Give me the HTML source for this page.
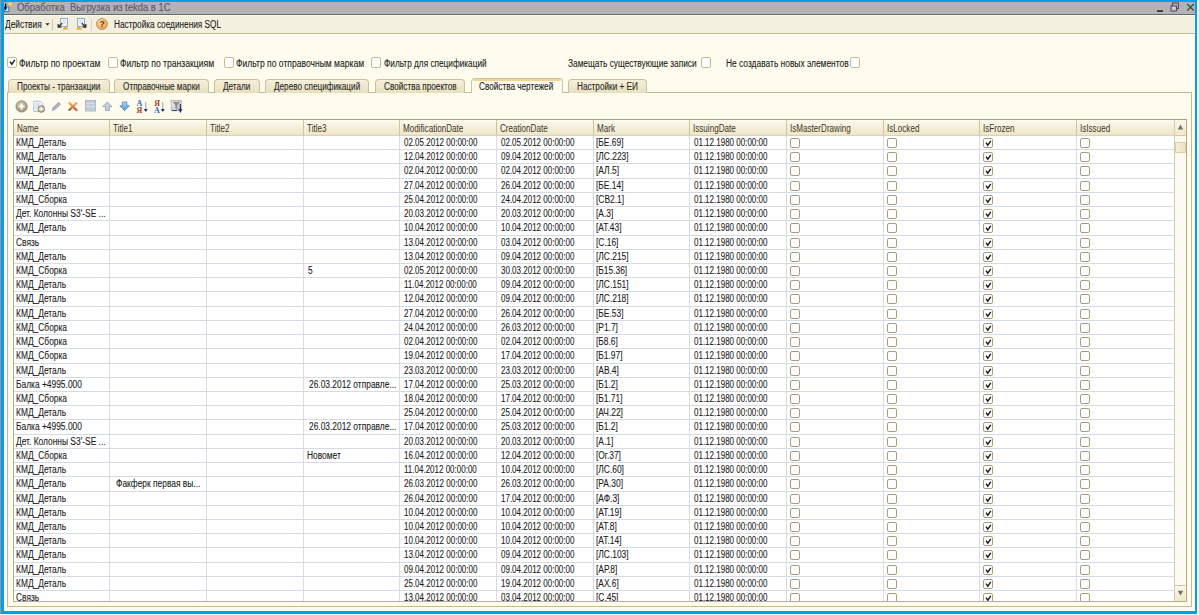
<!DOCTYPE html>
<html><head><meta charset="utf-8"><style>
*{box-sizing:border-box}
html,body{margin:0;padding:0;width:1199px;height:615px;overflow:hidden;background:#fefcef}
body{position:relative;font-family:"Liberation Sans",sans-serif;font-size:10px;color:#1c1c1c}
.a{position:absolute}
.t{position:absolute;white-space:nowrap;line-height:11px;transform:scaleX(0.84);transform-origin:0 0;-webkit-text-stroke:0.1px currentColor}
.d{transform:scaleX(0.80)}
.cb{position:absolute;width:10px;height:10px;border:1px solid #a89e7e;border-radius:2px;background:#fff}
.ck{position:absolute;left:1px;top:1px}
.tab{position:absolute;top:79px;height:14px;border:1px solid #c9bf9b;border-bottom:none;border-radius:4px 4px 0 0;background:linear-gradient(#f6f0da,#e8dfbd)}
.hl{position:absolute;height:1px;left:14px;width:1160px;background:#d5dbe2}
.vl{position:absolute;width:1px;top:136px;height:465px;background:#d8dde3}
.hv{position:absolute;width:1px;top:120px;height:15px;background:#cfc4a0}
</style></head><body>

<div class="a" style="left:0;top:0;width:1px;height:615px;background:#9a9590"></div>
<div class="a" style="left:1px;top:0;width:1196px;height:614px;border:3px solid #04a0e6;border-top-width:2px;border-right-width:2px"></div>
<div class="a" style="left:1197px;top:0;width:2px;height:615px;background:#f6f6f6"></div>
<div class="a" style="left:0;top:614px;width:1199px;height:1px;background:#f4f4f4"></div>
<div class="a" style="left:4px;top:2px;width:1191px;height:12px;background:#b3b3b3"></div>
<div class="a" style="left:4px;top:14px;width:1191px;height:1px;background:#6b6b6b"></div>
<div class="t" style="left:17px;top:2px;font-size:10.5px;transform:scaleX(0.9);-webkit-text-stroke:0.15px #5a596a;color:#5a596a">Обработка&nbsp; Выгрузка из tekda в 1С</div>
<svg class="a" style="left:4px;top:2px" width="12" height="12" viewBox="0 0 12 12"><defs><radialGradient id="og" cx="0.4" cy="0.3" r="0.7"><stop offset="0" stop-color="#ffe9a8"/><stop offset="1" stop-color="#f39a30"/></radialGradient></defs><rect x="0.5" y="5" width="4.3" height="4.6" fill="#c6e6fb" stroke="#3b6cb2" stroke-width="0.9"/><path d="M1.6 1.5 V7" stroke="#000" stroke-width="1.2"/><path d="M0.2 5.6 L1.6 8.4 L3 5.6Z" fill="#000"/><path d="M6.5 0.2 L9.2 2.6 L6.5 5.4 L3.9 2.6Z" fill="url(#og)"/><circle cx="6.5" cy="2.7" r="2.1" fill="url(#og)"/></svg>
<div class="a" style="left:1157px;top:10px;width:6px;height:2px;background:#444"></div>
<svg class="a" style="left:1170px;top:2px" width="10" height="10" viewBox="0 0 10 10"><rect x="2.5" y="1" width="6" height="5.5" fill="none" stroke="#505058" stroke-width="1.1"/><rect x="1" y="4" width="5.5" height="5" fill="#cfcaca" stroke="#505058" stroke-width="1.1"/></svg>
<svg class="a" style="left:1186px;top:3px" width="9" height="9" viewBox="0 0 9 9"><path d="M1.2 1 L7.8 7.6 M7.8 1 L1.2 7.6" stroke="#404048" stroke-width="1.3"/></svg>
<div class="a" style="left:4px;top:15px;width:1191px;height:18px;background:#f4f0e0"></div>
<div class="a" style="left:4px;top:33px;width:1191px;height:1px;background:#c6ba92"></div>
<div class="a" style="left:4px;top:15px;width:1191px;height:1px;background:#fdfaee"></div>
<div class="t" style="left:5px;top:19px">Действия</div>
<svg class="a" style="left:45px;top:23px" width="5" height="3" viewBox="0 0 5 3"><path d="M0.3 0.2 H4.7 L2.5 2.6Z" fill="#2a2418"/></svg>
<div class="a" style="left:52px;top:19px;width:1px;height:12px;background:#d4ccb4"></div>
<div class="a" style="left:91px;top:19px;width:1px;height:12px;background:#d8d2c0"></div>
<svg class="a" style="left:57px;top:18px" width="13" height="12" viewBox="0 0 13 12"><rect x="3.5" y="0.5" width="7" height="8" fill="#f4f6fa" stroke="#8eaad6"/><path d="M5 3H9M5 5H9" stroke="#cfd8e8"/><path d="M5.2 5.2 L1.2 9.2 M1.2 6 V9.2 H4.4" stroke="#3a3020" stroke-width="1.3" fill="none"/><path d="M4.8 11.6 L8.4 8.6 L12 11.6Z" fill="#f0a030"/></svg>
<svg class="a" style="left:75px;top:18px" width="13" height="12" viewBox="0 0 13 12"><rect x="2.5" y="0.5" width="7" height="8" fill="#f4f6fa" stroke="#8eaad6"/><path d="M4 3H8M4 5H8" stroke="#cfd8e8"/><path d="M6.8 5.2 L10.8 9.2 M10.8 6 V9.2 H7.6" stroke="#3a3020" stroke-width="1.3" fill="none"/><path d="M0.6 11.6 L4.2 8.6 L7.8 11.6Z" fill="#f0a030"/></svg>
<svg class="a" style="left:96px;top:18px" width="12" height="12" viewBox="0 0 12 12"><defs><radialGradient id="hg" cx="0.4" cy="0.35" r="0.7"><stop offset="0" stop-color="#fde2b0"/><stop offset="1" stop-color="#eb9a3c"/></radialGradient></defs><circle cx="6" cy="6" r="5.5" fill="url(#hg)" stroke="#b88a5a" stroke-width="0.8"/><text x="6" y="9.2" font-family="Liberation Sans" font-size="8.5" font-weight="bold" text-anchor="middle" fill="#6b1f1f" letter-spacing="0">?</text></svg>
<div class="t" style="left:114px;top:19px;transform:scaleX(0.825)">Настройка соединения SQL</div>
<div class="cb" style="left:7px;top:57px;height:11px;border-color:#c4bb9c"><svg class="ck" width="8" height="8" viewBox="0 0 8 8"><path d="M1 2.6 L2.8 5.2 L5.8 0.8" stroke="#1a1a1a" stroke-width="1.4" fill="none"/></svg></div>
<div class="t" style="left:19px;top:58px;transform:scaleX(0.87)">Фильтр по проектам</div>
<div class="cb" style="left:108px;top:57px;height:11px;border-color:#c4bb9c"></div>
<div class="t" style="left:120px;top:58px;transform:scaleX(0.86)">Фильтр по транзакциям</div>
<div class="cb" style="left:224px;top:57px;height:11px;border-color:#c4bb9c"></div>
<div class="t" style="left:236px;top:58px;transform:scaleX(0.855)">Фильтр по отправочным маркам</div>
<div class="cb" style="left:371px;top:57px;height:11px;border-color:#c4bb9c"></div>
<div class="t" style="left:384px;top:58px;transform:scaleX(0.825)">Фильтр для спецификаций</div>
<div class="t" style="left:568px;top:58px;transform:scaleX(0.83)">Замещать существующие записи</div>
<div class="cb" style="left:701px;top:57px;height:11px;border-color:#c4bb9c"></div>
<div class="t" style="left:726px;top:58px">Не создавать новых элементов</div>
<div class="cb" style="left:850px;top:57px;height:11px;border-color:#c4bb9c"></div>
<div class="a" style="left:7px;top:92px;width:1185px;height:515px;border:1px solid #c2b998;background:#fefcef"></div>
<div class="tab" style="left:8px;width:102px"></div>
<div class="t" style="left:17px;top:81px;color:#2a2a2a;transform:scaleX(0.82)">Проекты - транзакции</div>
<div class="tab" style="left:114px;width:95px"></div>
<div class="t" style="left:123px;top:81px;color:#2a2a2a;transform:scaleX(0.82)">Отправочные марки</div>
<div class="tab" style="left:214px;width:46px"></div>
<div class="t" style="left:223px;top:81px;color:#2a2a2a;transform:scaleX(0.82)">Детали</div>
<div class="tab" style="left:265px;width:104px"></div>
<div class="t" style="left:274px;top:81px;color:#2a2a2a;transform:scaleX(0.82)">Дерево спецификаций</div>
<div class="tab" style="left:375px;width:90px"></div>
<div class="t" style="left:384px;top:81px;color:#2a2a2a;transform:scaleX(0.82)">Свойства проектов</div>
<div class="a" style="left:471px;top:78px;width:92px;height:15px;border:1px solid #cdc3a0;border-bottom:none;border-radius:4px 4px 0 0;background:#fefcef"></div>
<div class="a" style="left:473px;top:79px;width:88px;height:2px;background:#f3d590;border-radius:2px 2px 0 0"></div>
<div class="t" style="left:479px;top:81px;color:#222;transform:scaleX(0.82)">Свойства чертежей</div>
<div class="tab" style="left:568px;width:79px"></div>
<div class="t" style="left:577px;top:81px;color:#2a2a2a;transform:scaleX(0.82)">Настройки + ЕИ</div>
<svg class="a" style="left:14px;top:99px" width="172" height="16" viewBox="0 0 172 16">
<defs><radialGradient id="g1" cx="0.45" cy="0.4" r="0.6"><stop offset="0" stop-color="#d8d2b8"/><stop offset="1" stop-color="#9a9272"/></radialGradient>
<linearGradient id="g2" x1="0" y1="0" x2="0" y2="1"><stop offset="0" stop-color="#b8daf6"/><stop offset="1" stop-color="#4f96dc"/></linearGradient>
<linearGradient id="g3" x1="0" y1="0" x2="0" y2="1"><stop offset="0" stop-color="#f4b060"/><stop offset="1" stop-color="#b85a30"/></linearGradient>
<linearGradient id="g4" x1="0" y1="0" x2="1" y2="1"><stop offset="0" stop-color="#f4f4f4"/><stop offset="1" stop-color="#b8b8b8"/></linearGradient></defs>
<circle cx="7.6" cy="7.4" r="5.7" fill="url(#g1)" stroke="#8c8668" stroke-width="0.7"/><path d="M4.6 7.4 H10.6 M7.6 4.4 V10.4" stroke="#fff" stroke-width="1.8"/>
<path d="M19.8 2.3 H26.5 L28.8 4.6 V12.4 H19.8Z" fill="#f4f6fa" stroke="#9ab0d0" stroke-width="0.8"/><path d="M21.5 5H26M21.5 7H25M21.5 9H24" stroke="#b8c4d8" stroke-width="0.8"/>
<circle cx="27.3" cy="10" r="3.4" fill="url(#g1)" stroke="#857e60" stroke-width="0.6"/><path d="M25.2 10H29.4M27.3 7.9V12.1" stroke="#fff" stroke-width="1.3"/>
<path d="M38.2 11.6 L39 8.6 L44.6 3.2 L46.6 5.2 L41 10.6Z" fill="#aab4c2" stroke="#8a96a8" stroke-width="0.6"/>
<path d="M55.4 4 L62.4 11 M62.4 4 L55.4 11" stroke="url(#g3)" stroke-width="2.4" stroke-linecap="round"/>
<rect x="71.5" y="1.5" width="10" height="10.5" fill="#c4ccd8" stroke="#b0bccc"/><path d="M72.5 4.5H80.5M72.5 7.5H80.5" stroke="#dce2ea"/>
<path d="M93.4 3 L98 7.6 H95.4 V11.6 H91.4 V7.6 H88.8Z" fill="#c2cede" stroke="#8c9cb2" stroke-width="0.8" stroke-linejoin="round"/>
<path d="M110.6 11.6 L115.4 6.8 H112.8 V3 H108.4 V6.8 H105.8Z" fill="url(#g2)" stroke="#4f82c0" stroke-width="0.8" stroke-linejoin="round"/>
<text x="122.6" y="7.2" font-family="Liberation Serif" font-size="8" font-weight="bold" fill="#2f62b4">A</text><text x="122.6" y="14" font-family="Liberation Serif" font-size="8" font-weight="bold" fill="#a8401a">Я</text><path d="M131.8 3V11" stroke="#8a8e98" stroke-width="0.9"/><path d="M129.8 10 L131.8 13 L133.8 10Z" fill="#1c3468"/>
<text x="140.2" y="7.2" font-family="Liberation Serif" font-size="8" font-weight="bold" fill="#a8401a">Я</text><text x="140" y="14" font-family="Liberation Serif" font-size="8" font-weight="bold" fill="#2f62b4">A</text><path d="M148.8 3V11" stroke="#8a8e98" stroke-width="0.9"/><path d="M146.8 10 L148.8 13 L150.8 10Z" fill="#1c3468"/>
<rect x="157.2" y="1.4" width="10" height="10" fill="url(#g4)" stroke="#a8acb4" stroke-width="0.8"/><path d="M158.6 2.8 H166 L163.4 6.6 V10.4 L161.4 9 V6.6Z" fill="#8e9298"/><path d="M158 11.6 H163" stroke="#2a3a8a" stroke-width="1"/><path d="M166.4 5V11.5 M164.9 10 L166.4 12.8 L167.9 10" stroke="#203268" stroke-width="1.1" fill="none"/>
</svg>
<div class="a" style="left:13px;top:119px;width:1174px;height:483px;border:1px solid #b5aa84;border-top-color:#a99e7a;background:#fff"></div>
<div class="a" style="left:14px;top:120px;width:1160px;height:15px;background:linear-gradient(#fdfcf4,#f7f4e6 20%,#f1ead0 80%,#eee4c4)"></div>
<div class="a" style="left:14px;top:135px;width:1160px;height:1px;background:#d8d2bc"></div>
<div class="t" style="left:17px;top:123px;color:#3e3626;transform:scaleX(0.81);-webkit-text-stroke:0">Name</div>
<div class="hv" style="left:109px"></div>
<div class="vl" style="left:109px"></div>
<div class="t" style="left:113px;top:123px;color:#3e3626;transform:scaleX(0.81);-webkit-text-stroke:0">Title1</div>
<div class="hv" style="left:206px"></div>
<div class="vl" style="left:206px"></div>
<div class="t" style="left:210px;top:123px;color:#3e3626;transform:scaleX(0.81);-webkit-text-stroke:0">Title2</div>
<div class="hv" style="left:303px"></div>
<div class="vl" style="left:303px"></div>
<div class="t" style="left:307px;top:123px;color:#3e3626;transform:scaleX(0.81);-webkit-text-stroke:0">Title3</div>
<div class="hv" style="left:399px"></div>
<div class="vl" style="left:399px"></div>
<div class="t" style="left:403px;top:123px;color:#3e3626;transform:scaleX(0.81);-webkit-text-stroke:0">ModificationDate</div>
<div class="hv" style="left:496px"></div>
<div class="vl" style="left:496px"></div>
<div class="t" style="left:500px;top:123px;color:#3e3626;transform:scaleX(0.81);-webkit-text-stroke:0">CreationDate</div>
<div class="hv" style="left:593px"></div>
<div class="vl" style="left:593px"></div>
<div class="t" style="left:597px;top:123px;color:#3e3626;transform:scaleX(0.81);-webkit-text-stroke:0">Mark</div>
<div class="hv" style="left:689px"></div>
<div class="vl" style="left:689px"></div>
<div class="t" style="left:693px;top:123px;color:#3e3626;transform:scaleX(0.81);-webkit-text-stroke:0">IssuingDate</div>
<div class="hv" style="left:786px"></div>
<div class="vl" style="left:786px"></div>
<div class="t" style="left:790px;top:123px;color:#3e3626;transform:scaleX(0.81);-webkit-text-stroke:0">IsMasterDrawing</div>
<div class="hv" style="left:883px"></div>
<div class="vl" style="left:883px"></div>
<div class="t" style="left:887px;top:123px;color:#3e3626;transform:scaleX(0.81);-webkit-text-stroke:0">IsLocked</div>
<div class="hv" style="left:979px"></div>
<div class="vl" style="left:979px"></div>
<div class="t" style="left:983px;top:123px;color:#3e3626;transform:scaleX(0.81);-webkit-text-stroke:0">IsFrozen</div>
<div class="hv" style="left:1076px"></div>
<div class="vl" style="left:1076px"></div>
<div class="t" style="left:1080px;top:123px;color:#3e3626;transform:scaleX(0.81);-webkit-text-stroke:0">IsIssued</div>
<div class="hl" style="top:149px"></div>
<div class="hl" style="top:163px"></div>
<div class="hl" style="top:178px"></div>
<div class="hl" style="top:192px"></div>
<div class="hl" style="top:206px"></div>
<div class="hl" style="top:220px"></div>
<div class="hl" style="top:235px"></div>
<div class="hl" style="top:249px"></div>
<div class="hl" style="top:263px"></div>
<div class="hl" style="top:277px"></div>
<div class="hl" style="top:291px"></div>
<div class="hl" style="top:306px"></div>
<div class="hl" style="top:320px"></div>
<div class="hl" style="top:334px"></div>
<div class="hl" style="top:348px"></div>
<div class="hl" style="top:363px"></div>
<div class="hl" style="top:377px"></div>
<div class="hl" style="top:391px"></div>
<div class="hl" style="top:405px"></div>
<div class="hl" style="top:419px"></div>
<div class="hl" style="top:434px"></div>
<div class="hl" style="top:448px"></div>
<div class="hl" style="top:462px"></div>
<div class="hl" style="top:476px"></div>
<div class="hl" style="top:491px"></div>
<div class="hl" style="top:505px"></div>
<div class="hl" style="top:519px"></div>
<div class="hl" style="top:533px"></div>
<div class="hl" style="top:547px"></div>
<div class="hl" style="top:562px"></div>
<div class="hl" style="top:576px"></div>
<div class="hl" style="top:590px"></div>
<div class="t" style="left:16px;top:137px">КМД_Деталь</div>
<div class="t d" style="left:404px;top:137px">02.05.2012 00:00:00</div>
<div class="t d" style="left:501px;top:137px">02.05.2012 00:00:00</div>
<div class="t" style="left:596px;top:137px">[БЕ.69]</div>
<div class="t d" style="left:694px;top:137px">01.12.1980 00:00:00</div>
<div class="cb" style="left:790px;top:138px;"></div>
<div class="cb" style="left:887px;top:138px;"></div>
<div class="cb" style="left:983px;top:138px;"><svg class="ck" width="8" height="8" viewBox="0 0 8 8"><path d="M1 2.6 L2.8 5.2 L5.8 0.8" stroke="#1a1a1a" stroke-width="1.4" fill="none"/></svg></div>
<div class="cb" style="left:1080px;top:138px;"></div>
<div class="t" style="left:16px;top:151px">КМД_Деталь</div>
<div class="t d" style="left:404px;top:151px">12.04.2012 00:00:00</div>
<div class="t d" style="left:501px;top:151px">09.04.2012 00:00:00</div>
<div class="t" style="left:596px;top:151px">[ЛС.223]</div>
<div class="t d" style="left:694px;top:151px">01.12.1980 00:00:00</div>
<div class="cb" style="left:790px;top:152px;"></div>
<div class="cb" style="left:887px;top:152px;"></div>
<div class="cb" style="left:983px;top:152px;"><svg class="ck" width="8" height="8" viewBox="0 0 8 8"><path d="M1 2.6 L2.8 5.2 L5.8 0.8" stroke="#1a1a1a" stroke-width="1.4" fill="none"/></svg></div>
<div class="cb" style="left:1080px;top:152px;"></div>
<div class="t" style="left:16px;top:165px">КМД_Деталь</div>
<div class="t d" style="left:404px;top:165px">02.04.2012 00:00:00</div>
<div class="t d" style="left:501px;top:165px">02.04.2012 00:00:00</div>
<div class="t" style="left:596px;top:165px">[АЛ.5]</div>
<div class="t d" style="left:694px;top:165px">01.12.1980 00:00:00</div>
<div class="cb" style="left:790px;top:166px;"></div>
<div class="cb" style="left:887px;top:166px;"></div>
<div class="cb" style="left:983px;top:166px;"><svg class="ck" width="8" height="8" viewBox="0 0 8 8"><path d="M1 2.6 L2.8 5.2 L5.8 0.8" stroke="#1a1a1a" stroke-width="1.4" fill="none"/></svg></div>
<div class="cb" style="left:1080px;top:166px;"></div>
<div class="t" style="left:16px;top:180px">КМД_Деталь</div>
<div class="t d" style="left:404px;top:180px">27.04.2012 00:00:00</div>
<div class="t d" style="left:501px;top:180px">26.04.2012 00:00:00</div>
<div class="t" style="left:596px;top:180px">[БЕ.14]</div>
<div class="t d" style="left:694px;top:180px">01.12.1980 00:00:00</div>
<div class="cb" style="left:790px;top:181px;"></div>
<div class="cb" style="left:887px;top:181px;"></div>
<div class="cb" style="left:983px;top:181px;"><svg class="ck" width="8" height="8" viewBox="0 0 8 8"><path d="M1 2.6 L2.8 5.2 L5.8 0.8" stroke="#1a1a1a" stroke-width="1.4" fill="none"/></svg></div>
<div class="cb" style="left:1080px;top:181px;"></div>
<div class="t" style="left:16px;top:194px">КМД_Сборка</div>
<div class="t d" style="left:404px;top:194px">25.04.2012 00:00:00</div>
<div class="t d" style="left:501px;top:194px">24.04.2012 00:00:00</div>
<div class="t" style="left:596px;top:194px">[СВ2.1]</div>
<div class="t d" style="left:694px;top:194px">01.12.1980 00:00:00</div>
<div class="cb" style="left:790px;top:195px;"></div>
<div class="cb" style="left:887px;top:195px;"></div>
<div class="cb" style="left:983px;top:195px;"><svg class="ck" width="8" height="8" viewBox="0 0 8 8"><path d="M1 2.6 L2.8 5.2 L5.8 0.8" stroke="#1a1a1a" stroke-width="1.4" fill="none"/></svg></div>
<div class="cb" style="left:1080px;top:195px;"></div>
<div class="t" style="left:16px;top:208px">Дет. Колонны S3&#x27;-SE ...</div>
<div class="t d" style="left:404px;top:208px">20.03.2012 00:00:00</div>
<div class="t d" style="left:501px;top:208px">20.03.2012 00:00:00</div>
<div class="t" style="left:596px;top:208px">[А.3]</div>
<div class="t d" style="left:694px;top:208px">01.12.1980 00:00:00</div>
<div class="cb" style="left:790px;top:209px;"></div>
<div class="cb" style="left:887px;top:209px;"></div>
<div class="cb" style="left:983px;top:209px;"><svg class="ck" width="8" height="8" viewBox="0 0 8 8"><path d="M1 2.6 L2.8 5.2 L5.8 0.8" stroke="#1a1a1a" stroke-width="1.4" fill="none"/></svg></div>
<div class="cb" style="left:1080px;top:209px;"></div>
<div class="t" style="left:16px;top:222px">КМД_Деталь</div>
<div class="t d" style="left:404px;top:222px">10.04.2012 00:00:00</div>
<div class="t d" style="left:501px;top:222px">10.04.2012 00:00:00</div>
<div class="t" style="left:596px;top:222px">[АТ.43]</div>
<div class="t d" style="left:694px;top:222px">01.12.1980 00:00:00</div>
<div class="cb" style="left:790px;top:223px;"></div>
<div class="cb" style="left:887px;top:223px;"></div>
<div class="cb" style="left:983px;top:223px;"><svg class="ck" width="8" height="8" viewBox="0 0 8 8"><path d="M1 2.6 L2.8 5.2 L5.8 0.8" stroke="#1a1a1a" stroke-width="1.4" fill="none"/></svg></div>
<div class="cb" style="left:1080px;top:223px;"></div>
<div class="t" style="left:16px;top:237px">Связь</div>
<div class="t d" style="left:404px;top:237px">13.04.2012 00:00:00</div>
<div class="t d" style="left:501px;top:237px">03.04.2012 00:00:00</div>
<div class="t" style="left:596px;top:237px">[С.16]</div>
<div class="t d" style="left:694px;top:237px">01.12.1980 00:00:00</div>
<div class="cb" style="left:790px;top:238px;"></div>
<div class="cb" style="left:887px;top:238px;"></div>
<div class="cb" style="left:983px;top:238px;"><svg class="ck" width="8" height="8" viewBox="0 0 8 8"><path d="M1 2.6 L2.8 5.2 L5.8 0.8" stroke="#1a1a1a" stroke-width="1.4" fill="none"/></svg></div>
<div class="cb" style="left:1080px;top:238px;"></div>
<div class="t" style="left:16px;top:251px">КМД_Деталь</div>
<div class="t d" style="left:404px;top:251px">13.04.2012 00:00:00</div>
<div class="t d" style="left:501px;top:251px">09.04.2012 00:00:00</div>
<div class="t" style="left:596px;top:251px">[ЛС.215]</div>
<div class="t d" style="left:694px;top:251px">01.12.1980 00:00:00</div>
<div class="cb" style="left:790px;top:252px;"></div>
<div class="cb" style="left:887px;top:252px;"></div>
<div class="cb" style="left:983px;top:252px;"><svg class="ck" width="8" height="8" viewBox="0 0 8 8"><path d="M1 2.6 L2.8 5.2 L5.8 0.8" stroke="#1a1a1a" stroke-width="1.4" fill="none"/></svg></div>
<div class="cb" style="left:1080px;top:252px;"></div>
<div class="t" style="left:16px;top:265px">КМД_Сборка</div>
<div class="t" style="left:308px;top:265px">5</div>
<div class="t d" style="left:404px;top:265px">02.05.2012 00:00:00</div>
<div class="t d" style="left:501px;top:265px">30.03.2012 00:00:00</div>
<div class="t" style="left:596px;top:265px">[Б15.36]</div>
<div class="t d" style="left:694px;top:265px">01.12.1980 00:00:00</div>
<div class="cb" style="left:790px;top:266px;"></div>
<div class="cb" style="left:887px;top:266px;"></div>
<div class="cb" style="left:983px;top:266px;"><svg class="ck" width="8" height="8" viewBox="0 0 8 8"><path d="M1 2.6 L2.8 5.2 L5.8 0.8" stroke="#1a1a1a" stroke-width="1.4" fill="none"/></svg></div>
<div class="cb" style="left:1080px;top:266px;"></div>
<div class="t" style="left:16px;top:279px">КМД_Деталь</div>
<div class="t d" style="left:404px;top:279px">11.04.2012 00:00:00</div>
<div class="t d" style="left:501px;top:279px">09.04.2012 00:00:00</div>
<div class="t" style="left:596px;top:279px">[ЛС.151]</div>
<div class="t d" style="left:694px;top:279px">01.12.1980 00:00:00</div>
<div class="cb" style="left:790px;top:280px;"></div>
<div class="cb" style="left:887px;top:280px;"></div>
<div class="cb" style="left:983px;top:280px;"><svg class="ck" width="8" height="8" viewBox="0 0 8 8"><path d="M1 2.6 L2.8 5.2 L5.8 0.8" stroke="#1a1a1a" stroke-width="1.4" fill="none"/></svg></div>
<div class="cb" style="left:1080px;top:280px;"></div>
<div class="t" style="left:16px;top:293px">КМД_Деталь</div>
<div class="t d" style="left:404px;top:293px">12.04.2012 00:00:00</div>
<div class="t d" style="left:501px;top:293px">09.04.2012 00:00:00</div>
<div class="t" style="left:596px;top:293px">[ЛС.218]</div>
<div class="t d" style="left:694px;top:293px">01.12.1980 00:00:00</div>
<div class="cb" style="left:790px;top:294px;"></div>
<div class="cb" style="left:887px;top:294px;"></div>
<div class="cb" style="left:983px;top:294px;"><svg class="ck" width="8" height="8" viewBox="0 0 8 8"><path d="M1 2.6 L2.8 5.2 L5.8 0.8" stroke="#1a1a1a" stroke-width="1.4" fill="none"/></svg></div>
<div class="cb" style="left:1080px;top:294px;"></div>
<div class="t" style="left:16px;top:308px">КМД_Деталь</div>
<div class="t d" style="left:404px;top:308px">27.04.2012 00:00:00</div>
<div class="t d" style="left:501px;top:308px">26.04.2012 00:00:00</div>
<div class="t" style="left:596px;top:308px">[БЕ.53]</div>
<div class="t d" style="left:694px;top:308px">01.12.1980 00:00:00</div>
<div class="cb" style="left:790px;top:309px;"></div>
<div class="cb" style="left:887px;top:309px;"></div>
<div class="cb" style="left:983px;top:309px;"><svg class="ck" width="8" height="8" viewBox="0 0 8 8"><path d="M1 2.6 L2.8 5.2 L5.8 0.8" stroke="#1a1a1a" stroke-width="1.4" fill="none"/></svg></div>
<div class="cb" style="left:1080px;top:309px;"></div>
<div class="t" style="left:16px;top:322px">КМД_Сборка</div>
<div class="t d" style="left:404px;top:322px">24.04.2012 00:00:00</div>
<div class="t d" style="left:501px;top:322px">26.03.2012 00:00:00</div>
<div class="t" style="left:596px;top:322px">[Р1.7]</div>
<div class="t d" style="left:694px;top:322px">01.12.1980 00:00:00</div>
<div class="cb" style="left:790px;top:323px;"></div>
<div class="cb" style="left:887px;top:323px;"></div>
<div class="cb" style="left:983px;top:323px;"><svg class="ck" width="8" height="8" viewBox="0 0 8 8"><path d="M1 2.6 L2.8 5.2 L5.8 0.8" stroke="#1a1a1a" stroke-width="1.4" fill="none"/></svg></div>
<div class="cb" style="left:1080px;top:323px;"></div>
<div class="t" style="left:16px;top:336px">КМД_Сборка</div>
<div class="t d" style="left:404px;top:336px">02.04.2012 00:00:00</div>
<div class="t d" style="left:501px;top:336px">02.04.2012 00:00:00</div>
<div class="t" style="left:596px;top:336px">[Б8.6]</div>
<div class="t d" style="left:694px;top:336px">01.12.1980 00:00:00</div>
<div class="cb" style="left:790px;top:337px;"></div>
<div class="cb" style="left:887px;top:337px;"></div>
<div class="cb" style="left:983px;top:337px;"><svg class="ck" width="8" height="8" viewBox="0 0 8 8"><path d="M1 2.6 L2.8 5.2 L5.8 0.8" stroke="#1a1a1a" stroke-width="1.4" fill="none"/></svg></div>
<div class="cb" style="left:1080px;top:337px;"></div>
<div class="t" style="left:16px;top:350px">КМД_Сборка</div>
<div class="t d" style="left:404px;top:350px">19.04.2012 00:00:00</div>
<div class="t d" style="left:501px;top:350px">17.04.2012 00:00:00</div>
<div class="t" style="left:596px;top:350px">[Б1.97]</div>
<div class="t d" style="left:694px;top:350px">01.12.1980 00:00:00</div>
<div class="cb" style="left:790px;top:351px;"></div>
<div class="cb" style="left:887px;top:351px;"></div>
<div class="cb" style="left:983px;top:351px;"><svg class="ck" width="8" height="8" viewBox="0 0 8 8"><path d="M1 2.6 L2.8 5.2 L5.8 0.8" stroke="#1a1a1a" stroke-width="1.4" fill="none"/></svg></div>
<div class="cb" style="left:1080px;top:351px;"></div>
<div class="t" style="left:16px;top:365px">КМД_Деталь</div>
<div class="t d" style="left:404px;top:365px">23.03.2012 00:00:00</div>
<div class="t d" style="left:501px;top:365px">23.03.2012 00:00:00</div>
<div class="t" style="left:596px;top:365px">[АВ.4]</div>
<div class="t d" style="left:694px;top:365px">01.12.1980 00:00:00</div>
<div class="cb" style="left:790px;top:366px;"></div>
<div class="cb" style="left:887px;top:366px;"></div>
<div class="cb" style="left:983px;top:366px;"><svg class="ck" width="8" height="8" viewBox="0 0 8 8"><path d="M1 2.6 L2.8 5.2 L5.8 0.8" stroke="#1a1a1a" stroke-width="1.4" fill="none"/></svg></div>
<div class="cb" style="left:1080px;top:366px;"></div>
<div class="t" style="left:16px;top:379px">Балка +4995.000</div>
<div class="t" style="left:309px;top:379px">26.03.2012 отправле...</div>
<div class="t d" style="left:404px;top:379px">17.04.2012 00:00:00</div>
<div class="t d" style="left:501px;top:379px">25.03.2012 00:00:00</div>
<div class="t" style="left:596px;top:379px">[Б1.2]</div>
<div class="t d" style="left:694px;top:379px">01.12.1980 00:00:00</div>
<div class="cb" style="left:790px;top:380px;"></div>
<div class="cb" style="left:887px;top:380px;"></div>
<div class="cb" style="left:983px;top:380px;"><svg class="ck" width="8" height="8" viewBox="0 0 8 8"><path d="M1 2.6 L2.8 5.2 L5.8 0.8" stroke="#1a1a1a" stroke-width="1.4" fill="none"/></svg></div>
<div class="cb" style="left:1080px;top:380px;"></div>
<div class="t" style="left:16px;top:393px">КМД_Сборка</div>
<div class="t d" style="left:404px;top:393px">18.04.2012 00:00:00</div>
<div class="t d" style="left:501px;top:393px">17.04.2012 00:00:00</div>
<div class="t" style="left:596px;top:393px">[Б1.71]</div>
<div class="t d" style="left:694px;top:393px">01.12.1980 00:00:00</div>
<div class="cb" style="left:790px;top:394px;"></div>
<div class="cb" style="left:887px;top:394px;"></div>
<div class="cb" style="left:983px;top:394px;"><svg class="ck" width="8" height="8" viewBox="0 0 8 8"><path d="M1 2.6 L2.8 5.2 L5.8 0.8" stroke="#1a1a1a" stroke-width="1.4" fill="none"/></svg></div>
<div class="cb" style="left:1080px;top:394px;"></div>
<div class="t" style="left:16px;top:407px">КМД_Деталь</div>
<div class="t d" style="left:404px;top:407px">25.04.2012 00:00:00</div>
<div class="t d" style="left:501px;top:407px">25.04.2012 00:00:00</div>
<div class="t" style="left:596px;top:407px">[АЧ.22]</div>
<div class="t d" style="left:694px;top:407px">01.12.1980 00:00:00</div>
<div class="cb" style="left:790px;top:408px;"></div>
<div class="cb" style="left:887px;top:408px;"></div>
<div class="cb" style="left:983px;top:408px;"><svg class="ck" width="8" height="8" viewBox="0 0 8 8"><path d="M1 2.6 L2.8 5.2 L5.8 0.8" stroke="#1a1a1a" stroke-width="1.4" fill="none"/></svg></div>
<div class="cb" style="left:1080px;top:408px;"></div>
<div class="t" style="left:16px;top:421px">Балка +4995.000</div>
<div class="t" style="left:309px;top:421px">26.03.2012 отправле...</div>
<div class="t d" style="left:404px;top:421px">17.04.2012 00:00:00</div>
<div class="t d" style="left:501px;top:421px">25.03.2012 00:00:00</div>
<div class="t" style="left:596px;top:421px">[Б1.2]</div>
<div class="t d" style="left:694px;top:421px">01.12.1980 00:00:00</div>
<div class="cb" style="left:790px;top:422px;"></div>
<div class="cb" style="left:887px;top:422px;"></div>
<div class="cb" style="left:983px;top:422px;"><svg class="ck" width="8" height="8" viewBox="0 0 8 8"><path d="M1 2.6 L2.8 5.2 L5.8 0.8" stroke="#1a1a1a" stroke-width="1.4" fill="none"/></svg></div>
<div class="cb" style="left:1080px;top:422px;"></div>
<div class="t" style="left:16px;top:436px">Дет. Колонны S3&#x27;-SE ...</div>
<div class="t d" style="left:404px;top:436px">20.03.2012 00:00:00</div>
<div class="t d" style="left:501px;top:436px">20.03.2012 00:00:00</div>
<div class="t" style="left:596px;top:436px">[А.1]</div>
<div class="t d" style="left:694px;top:436px">01.12.1980 00:00:00</div>
<div class="cb" style="left:790px;top:437px;"></div>
<div class="cb" style="left:887px;top:437px;"></div>
<div class="cb" style="left:983px;top:437px;"><svg class="ck" width="8" height="8" viewBox="0 0 8 8"><path d="M1 2.6 L2.8 5.2 L5.8 0.8" stroke="#1a1a1a" stroke-width="1.4" fill="none"/></svg></div>
<div class="cb" style="left:1080px;top:437px;"></div>
<div class="t" style="left:16px;top:450px">КМД_Сборка</div>
<div class="t" style="left:307px;top:450px">Новомет</div>
<div class="t d" style="left:404px;top:450px">16.04.2012 00:00:00</div>
<div class="t d" style="left:501px;top:450px">12.04.2012 00:00:00</div>
<div class="t" style="left:596px;top:450px">[Ог.37]</div>
<div class="t d" style="left:694px;top:450px">01.12.1980 00:00:00</div>
<div class="cb" style="left:790px;top:451px;"></div>
<div class="cb" style="left:887px;top:451px;"></div>
<div class="cb" style="left:983px;top:451px;"><svg class="ck" width="8" height="8" viewBox="0 0 8 8"><path d="M1 2.6 L2.8 5.2 L5.8 0.8" stroke="#1a1a1a" stroke-width="1.4" fill="none"/></svg></div>
<div class="cb" style="left:1080px;top:451px;"></div>
<div class="t" style="left:16px;top:464px">КМД_Деталь</div>
<div class="t d" style="left:404px;top:464px">11.04.2012 00:00:00</div>
<div class="t d" style="left:501px;top:464px">10.04.2012 00:00:00</div>
<div class="t" style="left:596px;top:464px">[ЛС.60]</div>
<div class="t d" style="left:694px;top:464px">01.12.1980 00:00:00</div>
<div class="cb" style="left:790px;top:465px;"></div>
<div class="cb" style="left:887px;top:465px;"></div>
<div class="cb" style="left:983px;top:465px;"><svg class="ck" width="8" height="8" viewBox="0 0 8 8"><path d="M1 2.6 L2.8 5.2 L5.8 0.8" stroke="#1a1a1a" stroke-width="1.4" fill="none"/></svg></div>
<div class="cb" style="left:1080px;top:465px;"></div>
<div class="t" style="left:16px;top:478px">КМД_Деталь</div>
<div class="t" style="left:116px;top:478px">Факферк первая вы...</div>
<div class="t d" style="left:404px;top:478px">26.03.2012 00:00:00</div>
<div class="t d" style="left:501px;top:478px">26.03.2012 00:00:00</div>
<div class="t" style="left:596px;top:478px">[РА.30]</div>
<div class="t d" style="left:694px;top:478px">01.12.1980 00:00:00</div>
<div class="cb" style="left:790px;top:479px;"></div>
<div class="cb" style="left:887px;top:479px;"></div>
<div class="cb" style="left:983px;top:479px;"><svg class="ck" width="8" height="8" viewBox="0 0 8 8"><path d="M1 2.6 L2.8 5.2 L5.8 0.8" stroke="#1a1a1a" stroke-width="1.4" fill="none"/></svg></div>
<div class="cb" style="left:1080px;top:479px;"></div>
<div class="t" style="left:16px;top:493px">КМД_Деталь</div>
<div class="t d" style="left:404px;top:493px">26.04.2012 00:00:00</div>
<div class="t d" style="left:501px;top:493px">17.04.2012 00:00:00</div>
<div class="t" style="left:596px;top:493px">[АФ.3]</div>
<div class="t d" style="left:694px;top:493px">01.12.1980 00:00:00</div>
<div class="cb" style="left:790px;top:494px;"></div>
<div class="cb" style="left:887px;top:494px;"></div>
<div class="cb" style="left:983px;top:494px;"><svg class="ck" width="8" height="8" viewBox="0 0 8 8"><path d="M1 2.6 L2.8 5.2 L5.8 0.8" stroke="#1a1a1a" stroke-width="1.4" fill="none"/></svg></div>
<div class="cb" style="left:1080px;top:494px;"></div>
<div class="t" style="left:16px;top:507px">КМД_Деталь</div>
<div class="t d" style="left:404px;top:507px">10.04.2012 00:00:00</div>
<div class="t d" style="left:501px;top:507px">10.04.2012 00:00:00</div>
<div class="t" style="left:596px;top:507px">[АТ.19]</div>
<div class="t d" style="left:694px;top:507px">01.12.1980 00:00:00</div>
<div class="cb" style="left:790px;top:508px;"></div>
<div class="cb" style="left:887px;top:508px;"></div>
<div class="cb" style="left:983px;top:508px;"><svg class="ck" width="8" height="8" viewBox="0 0 8 8"><path d="M1 2.6 L2.8 5.2 L5.8 0.8" stroke="#1a1a1a" stroke-width="1.4" fill="none"/></svg></div>
<div class="cb" style="left:1080px;top:508px;"></div>
<div class="t" style="left:16px;top:521px">КМД_Деталь</div>
<div class="t d" style="left:404px;top:521px">10.04.2012 00:00:00</div>
<div class="t d" style="left:501px;top:521px">10.04.2012 00:00:00</div>
<div class="t" style="left:596px;top:521px">[АТ.8]</div>
<div class="t d" style="left:694px;top:521px">01.12.1980 00:00:00</div>
<div class="cb" style="left:790px;top:522px;"></div>
<div class="cb" style="left:887px;top:522px;"></div>
<div class="cb" style="left:983px;top:522px;"><svg class="ck" width="8" height="8" viewBox="0 0 8 8"><path d="M1 2.6 L2.8 5.2 L5.8 0.8" stroke="#1a1a1a" stroke-width="1.4" fill="none"/></svg></div>
<div class="cb" style="left:1080px;top:522px;"></div>
<div class="t" style="left:16px;top:535px">КМД_Деталь</div>
<div class="t d" style="left:404px;top:535px">10.04.2012 00:00:00</div>
<div class="t d" style="left:501px;top:535px">10.04.2012 00:00:00</div>
<div class="t" style="left:596px;top:535px">[АТ.14]</div>
<div class="t d" style="left:694px;top:535px">01.12.1980 00:00:00</div>
<div class="cb" style="left:790px;top:536px;"></div>
<div class="cb" style="left:887px;top:536px;"></div>
<div class="cb" style="left:983px;top:536px;"><svg class="ck" width="8" height="8" viewBox="0 0 8 8"><path d="M1 2.6 L2.8 5.2 L5.8 0.8" stroke="#1a1a1a" stroke-width="1.4" fill="none"/></svg></div>
<div class="cb" style="left:1080px;top:536px;"></div>
<div class="t" style="left:16px;top:549px">КМД_Деталь</div>
<div class="t d" style="left:404px;top:549px">13.04.2012 00:00:00</div>
<div class="t d" style="left:501px;top:549px">09.04.2012 00:00:00</div>
<div class="t" style="left:596px;top:549px">[ЛС.103]</div>
<div class="t d" style="left:694px;top:549px">01.12.1980 00:00:00</div>
<div class="cb" style="left:790px;top:550px;"></div>
<div class="cb" style="left:887px;top:550px;"></div>
<div class="cb" style="left:983px;top:550px;"><svg class="ck" width="8" height="8" viewBox="0 0 8 8"><path d="M1 2.6 L2.8 5.2 L5.8 0.8" stroke="#1a1a1a" stroke-width="1.4" fill="none"/></svg></div>
<div class="cb" style="left:1080px;top:550px;"></div>
<div class="t" style="left:16px;top:564px">КМД_Деталь</div>
<div class="t d" style="left:404px;top:564px">09.04.2012 00:00:00</div>
<div class="t d" style="left:501px;top:564px">09.04.2012 00:00:00</div>
<div class="t" style="left:596px;top:564px">[АР.8]</div>
<div class="t d" style="left:694px;top:564px">01.12.1980 00:00:00</div>
<div class="cb" style="left:790px;top:565px;"></div>
<div class="cb" style="left:887px;top:565px;"></div>
<div class="cb" style="left:983px;top:565px;"><svg class="ck" width="8" height="8" viewBox="0 0 8 8"><path d="M1 2.6 L2.8 5.2 L5.8 0.8" stroke="#1a1a1a" stroke-width="1.4" fill="none"/></svg></div>
<div class="cb" style="left:1080px;top:565px;"></div>
<div class="t" style="left:16px;top:578px">КМД_Деталь</div>
<div class="t d" style="left:404px;top:578px">25.04.2012 00:00:00</div>
<div class="t d" style="left:501px;top:578px">19.04.2012 00:00:00</div>
<div class="t" style="left:596px;top:578px">[АХ.6]</div>
<div class="t d" style="left:694px;top:578px">01.12.1980 00:00:00</div>
<div class="cb" style="left:790px;top:579px;"></div>
<div class="cb" style="left:887px;top:579px;"></div>
<div class="cb" style="left:983px;top:579px;"><svg class="ck" width="8" height="8" viewBox="0 0 8 8"><path d="M1 2.6 L2.8 5.2 L5.8 0.8" stroke="#1a1a1a" stroke-width="1.4" fill="none"/></svg></div>
<div class="cb" style="left:1080px;top:579px;"></div>
<div class="t" style="left:16px;top:592px">Связь</div>
<div class="t d" style="left:404px;top:592px">13.04.2012 00:00:00</div>
<div class="t d" style="left:501px;top:592px">03.04.2012 00:00:00</div>
<div class="t" style="left:596px;top:592px">[С.45]</div>
<div class="t d" style="left:694px;top:592px">01.12.1980 00:00:00</div>
<div class="cb" style="left:790px;top:593px;"></div>
<div class="cb" style="left:887px;top:593px;"></div>
<div class="cb" style="left:983px;top:593px;"><svg class="ck" width="8" height="8" viewBox="0 0 8 8"><path d="M1 2.6 L2.8 5.2 L5.8 0.8" stroke="#1a1a1a" stroke-width="1.4" fill="none"/></svg></div>
<div class="cb" style="left:1080px;top:593px;"></div>
<div class="a" style="left:14px;top:601px;width:1172px;height:5px;background:#fefcef"></div>
<div class="a" style="left:13px;top:601px;width:1174px;height:1px;background:#b9ae88"></div>
<div class="a" style="left:1174px;top:120px;width:12px;height:481px;background:#fbf9f0;border-left:1px solid #d6cdb0"></div>
<div class="a" style="left:1175px;top:120px;width:11px;height:16px;background:linear-gradient(#fbf8ea,#efe7c8);border-bottom:1px solid #d2c7a2"></div>
<svg class="a" style="left:1177px;top:124px" width="7" height="6" viewBox="0 0 7 6"><path d="M0.8 5.5 H6.2 L3.5 0.5Z" fill="#707070"/></svg>
<div class="a" style="left:1175px;top:142px;width:11px;height:11px;background:linear-gradient(90deg,#f6f1dc,#ebe3c4);border:1px solid #d8cfae"></div>
<div class="a" style="left:1175px;top:585px;width:11px;height:16px;background:linear-gradient(#fbf8ea,#efe7c8);border-top:1px solid #d2c7a2"></div>
<svg class="a" style="left:1177px;top:590px" width="7" height="6" viewBox="0 0 7 6"><path d="M0.8 0.8 H6.2 L3.5 5.5Z" fill="#707070"/></svg>
</body></html>
